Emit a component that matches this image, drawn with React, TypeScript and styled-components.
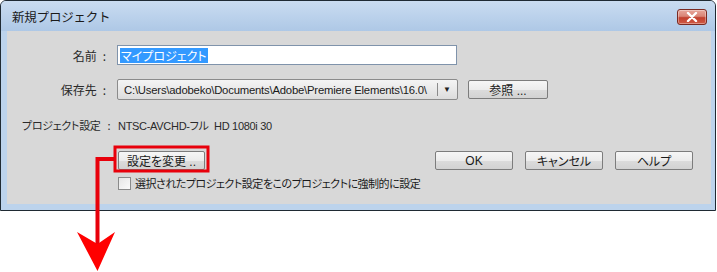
import React from "react";
import styled, { createGlobalStyle } from "styled-components";

const GlobalStyle = createGlobalStyle`
  html, body { margin: 0; padding: 0; background: #ffffff; }
  body { font-family: "Liberation Sans", "Noto Sans CJK JP", sans-serif; }
  #root { position: relative; width: 717px; height: 272px; overflow: hidden; }
`;

const Page = styled.div`
  position: relative;
  width: 717px;
  height: 272px;
  background: #ffffff;
`;

const Window = styled.div`
  width: 716px;
  height: 211px;
  box-sizing: border-box;
  border: 1px solid #1f2a33;
  border-radius: 6px 6px 0 0;
  background: #bcd3ec;
  display: flex;
  flex-direction: column;
  overflow: hidden;
`;

const TitleBar = styled.div`
  height: 30px;
  flex: none;
  display: flex;
  align-items: center;
  justify-content: space-between;
  padding: 0 8px 0 11px;
  background: linear-gradient(to bottom, #cadcf0 0%, #bdd3ec 45%, #aec8e6 100%);
`;

const Title = styled.span`
  font-family: "Noto Sans CJK JP", sans-serif;
  font-size: 12.5px;
  color: #1a1a1a;
  letter-spacing: -0.2px;
  margin-top: 1px;
`;

const CloseButton = styled.div`
  width: 30px;
  height: 16px;
  margin-top: 1px;
  box-sizing: border-box;
  border: 1px solid #7a2a22;
  border-radius: 3px;
  background: linear-gradient(to bottom, #e8a79c 0%, #d98476 45%, #c2402f 55%, #cf5a44 100%);
  display: flex;
  align-items: center;
  justify-content: center;
  box-shadow: inset 0 0 0 1px rgba(255, 255, 255, 0.35);
`;

const Client = styled.div`
  flex: 1;
  margin: 0 4px 6px 6px;
  background: #d8d8d8;
  display: flex;
  flex-direction: column;
  font-size: 12px;
  color: #1c1c1c;
`;

const FieldRow = styled.div<{ $top: number; $h: number }>`
  display: flex;
  align-items: center;
  height: ${(p) => p.$h}px;
  margin-top: ${(p) => p.$top}px;
`;

const Label = styled.div`
  width: 103px;
  flex: none;
  text-align: right;
  font-family: "Noto Sans CJK JP", sans-serif;
  font-feature-settings: "palt";
  font-size: 12px;
  color: #2a2a2a;
  padding-right: 4px;
  box-sizing: border-box;
`;

const Colon = styled.span`
  margin-left: 6px;
`;

const TextInput = styled.div`
  margin-left: 7px;
  width: 340px;
  height: 20px;
  box-sizing: border-box;
  border: 1px solid #7f93ab;
  background: #ffffff;
  display: flex;
  align-items: center;
  padding-left: 2px;
`;

const Selected = styled.span`
  background: #3399ff;
  color: #ffffff;
  font-family: "Noto Sans CJK JP", sans-serif;
  font-feature-settings: "palt";
  font-size: 12px;
  line-height: 15px;
  padding: 0 1px;
`;

const Combo = styled.div`
  margin-left: 7px;
  width: 341px;
  height: 21px;
  box-sizing: border-box;
  border: 1px solid #8b8b8b;
  border-radius: 2px;
  background: linear-gradient(to bottom, #f4f4f4 0%, #e9e9e9 50%, #dcdcdc 100%);
  display: flex;
  align-items: center;
`;

const ComboText = styled.span`
  flex: 1;
  padding-left: 6px;
  font-family: "Liberation Sans", sans-serif;
  font-size: 11.3px;
  letter-spacing: -0.2px;
  color: #1a1a1a;
  white-space: nowrap;
  overflow: hidden;
`;

const ComboSep = styled.div`
  width: 1px;
  height: 13px;
  background: #8a8a8a;
  margin-right: 5px;
`;

const ComboArrow = styled.span`
  width: 14px;
  font-size: 8px;
  color: #222;
  text-align: left;
`;

const Button = styled.div<{ $w: number; $ml?: number }>`
  width: ${(p) => p.$w}px;
  margin-left: ${(p) => p.$ml ?? 0}px;
  height: 19px;
  box-sizing: border-box;
  border: 1px solid #7c7c7c;
  border-radius: 2px;
  background: linear-gradient(to bottom, #f6f6f6 0%, #ececec 50%, #dcdcdc 51%, #d2d2d2 100%);
  display: flex;
  align-items: center;
  justify-content: center;
  font-family: "Liberation Sans", "Noto Sans CJK JP", sans-serif;
  font-feature-settings: "palt";
  font-size: 12px;
  color: #1a1a1a;
  flex: none;
`;

const InfoRow = styled.div`
  display: flex;
  align-items: center;
  height: 16px;
  margin-top: 17px;
  padding-left: 15px;
`;

const InfoLabel = styled.span`
  width: 96px;
  flex: none;
  font-family: "Noto Sans CJK JP", sans-serif;
  font-feature-settings: "palt";
  font-size: 11px;
  letter-spacing: -0.3px;
  color: #2a2a2a;
`;

const InfoColon = styled.span`
  margin-left: 7px;
`;

const InfoValue = styled.span`
  font-family: "Liberation Sans", "Noto Sans CJK JP", sans-serif;
  font-feature-settings: "palt";
  font-size: 11px;
  color: #2a2a2a;
  letter-spacing: -0.3px;
`;

const ButtonRow = styled.div`
  display: flex;
  align-items: center;
  margin-top: 18px;
  padding-left: 111px;
`;

const RightButtons = styled.div`
  display: flex;
  margin-left: auto;
  margin-right: 18px;
  gap: 12px;
`;

const CheckRow = styled.div`
  display: flex;
  align-items: center;
  margin-top: 6px;
  padding-left: 111px;
  height: 14px;
`;

const Checkbox = styled.div`
  width: 13px;
  height: 13px;
  box-sizing: border-box;
  border: 1px solid #8a8a8a;
  background: linear-gradient(135deg, #e6e6e6 0%, #fbfbfb 100%);
  flex: none;
`;

const CheckLabel = styled.span`
  margin-left: 4px;
  font-family: "Noto Sans CJK JP", sans-serif;
  font-feature-settings: "palt";
  font-size: 11px;
  letter-spacing: -0.5px;
  color: #1a1a1a;
`;

const Annotation = styled.svg`
  position: absolute;
  left: 0;
  top: 0;
  pointer-events: none;
`;

export default function App() {
  return (
    <>
      <GlobalStyle />
      <Page>
        <Window>
          <TitleBar>
            <Title>新規プロジェクト</Title>
            <CloseButton>
              <svg width="12" height="10" viewBox="0 0 12 10">
                <path d="M2 1 L10 9 M10 1 L2 9" stroke="#ffffff" strokeWidth="2.4" strokeLinecap="round" />
              </svg>
            </CloseButton>
          </TitleBar>
          <Client>
            <FieldRow $top={14} $h={20}>
              <Label>
                名前<Colon>:</Colon>
              </Label>
              <TextInput>
                <Selected>マイプロジェクト</Selected>
              </TextInput>
            </FieldRow>
            <FieldRow $top={14} $h={21}>
              <Label>
                保存先<Colon>:</Colon>
              </Label>
              <Combo>
                <ComboText>C:\Users\adobeko\Documents\Adobe\Premiere Elements\16.0\</ComboText>
                <ComboSep />
                <ComboArrow>▼</ComboArrow>
              </Combo>
              <Button $w={80} $ml={10}>参照 ...</Button>
            </FieldRow>
            <InfoRow>
              <InfoLabel>
                プロジェクト設定<InfoColon>:</InfoColon>
              </InfoLabel>
              <InfoValue>NTSC-AVCHD-フル&nbsp;&nbsp;HD 1080i 30</InfoValue>
            </InfoRow>
            <ButtonRow>
              <Button $w={87}>設定を変更 ..</Button>
              <RightButtons>
                <Button $w={78}>OK</Button>
                <Button $w={78}>キャンセル</Button>
                <Button $w={78}>ヘルプ</Button>
              </RightButtons>
            </ButtonRow>
            <CheckRow>
              <Checkbox />
              <CheckLabel>選択されたプロジェクト設定をこのプロジェクトに強制的に設定</CheckLabel>
            </CheckRow>
          </Client>
        </Window>
        <Annotation width="717" height="272" viewBox="0 0 717 272">
          <rect x="115" y="147" width="93" height="24" fill="none" stroke="#e8000b" strokeWidth="3" />
          <path d="M97.5 159 H114" stroke="#e8000b" strokeWidth="4" fill="none" />
          <path d="M97.5 157 V246" stroke="#e8000b" strokeWidth="4" fill="none" />
          <polygon points="77,232 97.5,244 115,232 97.5,271" fill="#ff0000" />
        </Annotation>
      </Page>
    </>
  );
}
